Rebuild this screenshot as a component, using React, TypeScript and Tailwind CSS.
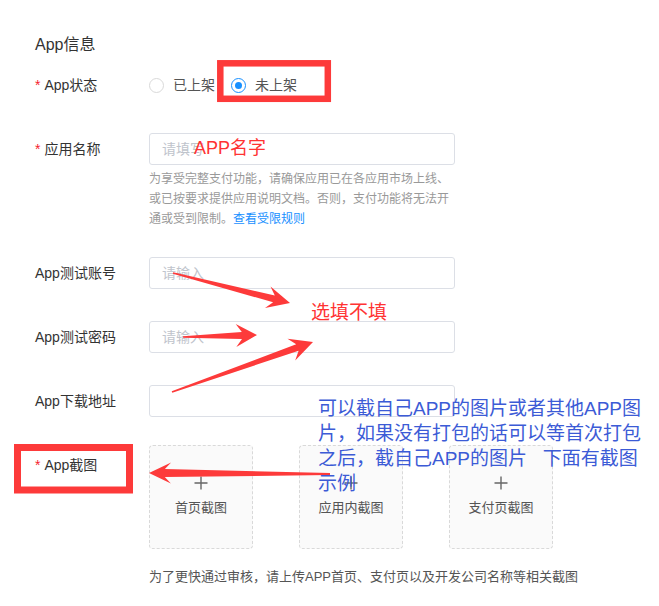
import React from 'react';

type Pt = [number, number];

// tapered annotation arrow: thin tail, wider shaft near the head
function arrowPoints(tail: Pt, tip: Pt, head = 22, headW = 22, tailW = 1.5, neckW = 7) {
  const dx = tip[0] - tail[0];
  const dy = tip[1] - tail[1];
  const len = Math.hypot(dx, dy);
  const ux = dx / len;
  const uy = dy / len;
  const nx = -uy;
  const ny = ux;
  const neck: Pt = [tip[0] - ux * head * 0.72, tip[1] - uy * head * 0.72];
  const base: Pt = [tip[0] - ux * head, tip[1] - uy * head];
  const pts: Pt[] = [
    [tail[0] + (nx * tailW) / 2, tail[1] + (ny * tailW) / 2],
    [neck[0] + (nx * neckW) / 2, neck[1] + (ny * neckW) / 2],
    [base[0] + (nx * headW) / 2, base[1] + (ny * headW) / 2],
    tip,
    [base[0] - (nx * headW) / 2, base[1] - (ny * headW) / 2],
    [neck[0] - (nx * neckW) / 2, neck[1] - (ny * neckW) / 2],
    [tail[0] - (nx * tailW) / 2, tail[1] - (ny * tailW) / 2],
  ];
  return pts.map((p) => `${p[0].toFixed(1)},${p[1].toFixed(1)}`).join(' ');
}

function Label({ children, required }: { children: React.ReactNode; required?: boolean }) {
  return (
    <div className="w-[114px] shrink-0 text-[14px] leading-[22px] text-[#333]">
      {required && <span className="mr-[4px] text-[#f5222d]">*</span>}
      {children}
    </div>
  );
}

function TextInput({ placeholder }: { placeholder?: string }) {
  return (
    <div className="flex h-[32px] w-[306px] items-center rounded-[3px] border border-[#dcdfe6] bg-white pl-[12px] text-[14px] text-[#c0c4cc]">
      {placeholder}
    </div>
  );
}

function Radio({ checked, label }: { checked?: boolean; label: string }) {
  return (
    <div className="flex items-center">
      <span
        className={
          checked
            ? 'flex h-[15px] w-[15px] items-center justify-center rounded-full border border-[#1890ff] bg-white'
            : 'flex h-[15px] w-[15px] items-center justify-center rounded-full border border-[#d9d9d9] bg-white'
        }
      >
        {checked && <span className="h-[7px] w-[7px] rounded-full bg-[#1890ff]" />}
      </span>
      <span className="ml-[9px] text-[14px] leading-[22px] text-[#555]">{label}</span>
    </div>
  );
}

function UploadBox({ label }: { label: string }) {
  return (
    <div className="flex h-[104px] w-[104px] flex-col items-center justify-center rounded-[4px] border border-dashed border-[#d9d9d9] bg-[#fafafa]">
      <svg width="14" height="14" viewBox="0 0 14 14">
        <path d="M7 0.5v13M0.5 7h13" stroke="#666" strokeWidth="1.4" />
      </svg>
      <span className="mt-[8px] text-[13px] leading-[20px] text-[#555]">{label}</span>
    </div>
  );
}

export default function App() {
  const red = '#fd3a3a';
  return (
    <div className="relative h-[606px] w-[659px] overflow-hidden bg-white font-['Liberation_Sans','Noto_Sans_CJK_SC',sans-serif]">
      <div className="pl-[35px] pt-[34px]">
        <div className="text-[16px] leading-[22px] text-[#333]">App信息</div>

        <div className="mt-[18px] flex items-center">
          <Label required>App状态</Label>
          <div className="flex items-center gap-[16px]">
            <Radio label="已上架" />
            <Radio checked label="未上架" />
          </div>
        </div>

        <div className="mt-[37px] flex items-center">
          <Label required>应用名称</Label>
          <TextInput placeholder="请填写" />
        </div>
        <div className="ml-[114px] mt-[4px] w-[306px] text-[12px] leading-[20px] text-[#999]">
          为享受完整支付功能，请确保应用已在各应用市场上线、或已按要求提供应用说明文档。否则，支付功能将无法开通或受到限制。
          <span className="text-[#1890ff]">查看受限规则</span>
        </div>

        <div className="mt-[28px] flex items-center">
          <Label>App测试账号</Label>
          <TextInput placeholder="请输入" />
        </div>
        <div className="mt-[32px] flex items-center">
          <Label>App测试密码</Label>
          <TextInput placeholder="请输入" />
        </div>
        <div className="mt-[32px] flex items-center">
          <Label>App下载地址</Label>
          <TextInput />
        </div>

        <div className="mt-[28px] flex items-start">
          <div className="pt-[9px]">
            <Label required>App截图</Label>
          </div>
          <div className="flex gap-[46px]">
            <UploadBox label="首页截图" />
            <UploadBox label="应用内截图" />
            <UploadBox label="支付页截图" />
          </div>
        </div>

        <div className="ml-[114px] mt-[18px] text-[13px] leading-[20px] text-[#555]">
          为了更快通过审核，请上传APP首页、支付页以及开发公司名称等相关截图
        </div>
      </div>

      {/* annotations drawn over the form */}
      <svg className="pointer-events-none absolute left-0 top-0" width="659" height="606">
        <rect x="220.3" y="63.3" width="107.5" height="35.5" fill="none" stroke={red} strokeWidth="6.5" />
        <rect x="17.5" y="447.5" width="112" height="42.5" fill="none" stroke={red} strokeWidth="7" />
        <polygon points={arrowPoints([173, 273], [290, 303], 23, 22, 1.5, 7)} fill={red} />
        <polygon points={arrowPoints([183, 337], [257, 335], 21, 23, 1.5, 7)} fill={red} />
        <polygon points={arrowPoints([172, 392], [313, 342], 23, 23, 1.5, 7)} fill={red} />
        <polygon points={arrowPoints([330, 474], [149, 473], 22, 21, 2, 8)} fill={red} />
      </svg>

      <div className="pointer-events-none absolute left-[194px] top-[136px] text-[18px] leading-[24px] text-[#ff3333]">
        APP名字
      </div>
      <div className="pointer-events-none absolute left-[311px] top-[300px] text-[19px] leading-[26px] text-[#ff3333]">
        选填不填
      </div>
      <div className="pointer-events-none absolute left-[318px] top-[396px] whitespace-pre text-[19px] leading-[25px] text-[#3c5bd6]">
        可以截自己APP的图片或者其他APP图
        <br />
        片，如果没有打包的话可以等首次打包
        <br />
        {'之后，截自己APP的图片   下面有截图'}
        <br />
        示例
      </div>
    </div>
  );
}
